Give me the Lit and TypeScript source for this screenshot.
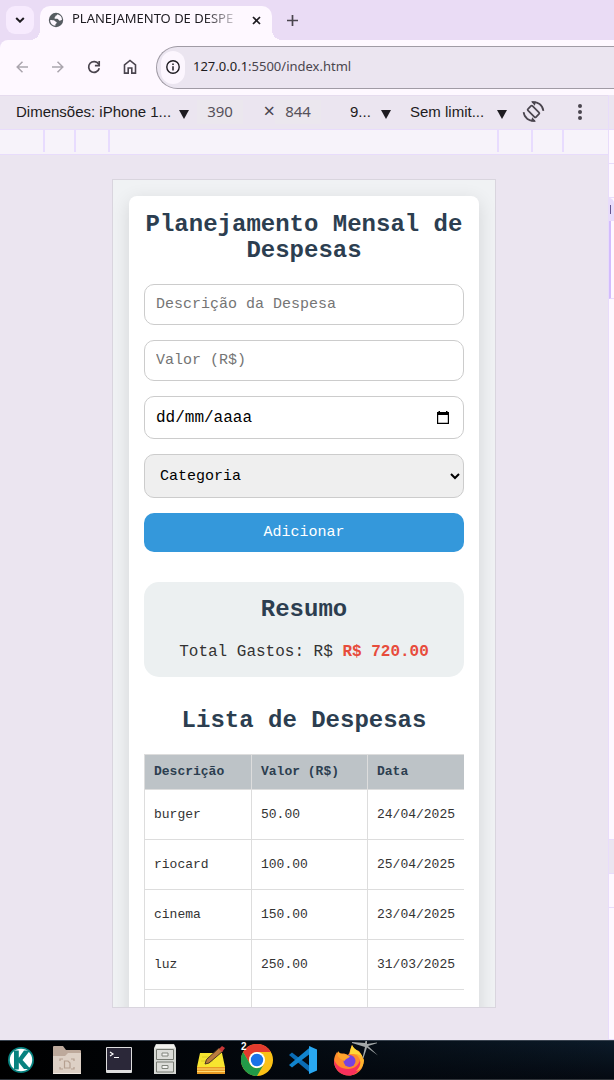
import { LitElement, html, css, svg } from "lit";
import { customElement, property } from "lit/decorators.js";

const caret = html`<svg class="caret" width="10" height="9" viewBox="0 0 10 9" aria-hidden="true"><path d="M0 0h10L5 9z" fill="currentColor" /></svg>`;

/* ---------- Expense planner page ---------- */

interface Expense {
  name: string;
  value: string;
  date: string;
}

@customElement("expense-planner")
class ExpensePlanner extends LitElement {
  @property({ attribute: false }) expenses: Expense[] = [
    { name: "burger", value: "50.00", date: "24/04/2025" },
    { name: "riocard", value: "100.00", date: "25/04/2025" },
    { name: "cinema", value: "150.00", date: "23/04/2025" },
    { name: "luz", value: "250.00", date: "31/03/2025" },
    { name: "", value: "", date: "" },
  ];

  static styles = css`
    :host {
      display: block;
      padding: 16px;
      background: #f0f2f4;
      color: #333;
      font-family: "Liberation Mono", "Courier New", monospace;
      font-size: 16px;
    }
    .card {
      padding: 16px 15px;
      border-radius: 8px;
      background: #fff;
      box-shadow: 0 5px 19px rgba(0, 0, 0, 0.12);
    }
    h1,
    h2 {
      margin: 0;
      color: #2c3e50;
      font-size: 24px;
      line-height: 26px;
      font-weight: bold;
      text-align: center;
    }
    .form {
      display: flex;
      flex-direction: column;
      gap: 15px;
      margin-top: 20px;
    }
    .field,
    .submit {
      box-sizing: border-box;
      width: 100%;
      height: 41px;
      margin: 0;
      padding: 0 11px;
      border: 1px solid #ccc;
      border-radius: 10px;
      background: #fff;
      color: #000;
      font-family: inherit;
      font-size: 15px;
    }
    .field::placeholder {
      color: #757575;
      opacity: 1;
    }
    .date {
      display: flex;
      align-items: center;
      height: 43px;
    }
    .date-input {
      flex: 1;
      min-width: 0;
      padding: 0;
      border: 0;
      outline: 0;
      background: none;
      color: #000;
      font-family: inherit;
      font-size: 16px;
    }
    .picker {
      display: flex;
      padding: 3px;
      border: 0;
      background: none;
      color: #000;
    }
    .category {
      height: 44px;
      background: #efefef;
    }
    .submit {
      height: 39px;
      border: 0;
      background: #3498db;
      color: #fff;
    }
    .summary {
      margin-top: 30px;
      padding: 15px;
      border-radius: 15px;
      background: #ecf0f1;
      text-align: center;
    }
    .total {
      margin: 19px 0 0;
      line-height: 20px;
    }
    .amount {
      color: #e74c3c;
      font-weight: bold;
    }
    .list-title {
      margin-top: 31px;
    }
    .table-wrap {
      margin-top: 20px;
      overflow: hidden;
    }
    table {
      width: 360px;
      table-layout: fixed;
      border-collapse: collapse;
      font-size: 13px;
    }
    .col-name {
      width: 107px;
    }
    .col-value {
      width: 116px;
    }
    th,
    td {
      box-sizing: border-box;
      padding: 0 9px;
      border: 1px solid #ddd;
      text-align: left;
      white-space: nowrap;
    }
    th {
      height: 35px;
      padding-bottom: 2px;
      background: #bdc3c7;
      color: #2c3e50;
    }
    td {
      height: 50px;
    }
  `;

  render() {
    return html`
      <div class="card">
        <h1>Planejamento Mensal de Despesas</h1>
        <form class="form" @submit=${(e: Event) => e.preventDefault()}>
          <input class="field" type="text" placeholder="Descrição da Despesa" aria-label="Descrição da Despesa" />
          <input class="field" type="text" inputmode="decimal" placeholder="Valor (R$)" aria-label="Valor (R$)" />
          <div class="field date">
            <input class="date-input" type="text" value="dd/mm/aaaa" aria-label="Data" />
            <button class="picker" type="button" aria-label="Abrir calendário">
              <svg width="12" height="13" viewBox="0 0 12 13">
                <path d="M1.5 0h1.5v1h6V0h1.5v1H12v12H0V1h1.5zM1.2 4v7.8h9.6V4z" fill="currentColor" fill-rule="evenodd" />
              </svg>
            </button>
          </div>
          <select class="field category" aria-label="Categoria">
            <option>Categoria</option>
          </select>
          <button class="submit" type="submit">Adicionar</button>
        </form>
        <section class="summary">
          <h2>Resumo</h2>
          <p class="total">Total Gastos: R$ <span class="amount">R$ 720.00</span></p>
        </section>
        <h2 class="list-title">Lista de Despesas</h2>
        <div class="table-wrap">
          <table>
            <colgroup><col class="col-name" /><col class="col-value" /><col /></colgroup>
            <thead>
              <tr><th>Descrição</th><th>Valor (R$)</th><th>Data</th></tr>
            </thead>
            <tbody>
              ${this.expenses.map((e) => html`<tr><td>${e.name}</td><td>${e.value}</td><td>${e.date}</td></tr>`)}
            </tbody>
          </table>
        </div>
      </div>
    `;
  }
}

/* ---------- Browser tab strip and address bar ---------- */

@customElement("browser-chrome")
class BrowserChrome extends LitElement {
  static styles = css`
    :host {
      display: block;
      background: #eadcf5;
      font-family: "Noto Sans", sans-serif;
    }
    button {
      display: flex;
      align-items: center;
      justify-content: center;
      padding: 0;
      border: 0;
      background: none;
      color: #4a454e;
    }
    .tabs {
      display: flex;
      align-items: flex-start;
      gap: 6px;
      height: 34px;
      padding: 6px 6px 0;
    }
    .search {
      width: 28px;
      height: 28px;
      border-radius: 9px;
      background: #f7ebfe;
      color: #1d1b20;
    }
    .tab {
      position: relative;
      display: flex;
      align-items: center;
      box-sizing: border-box;
      width: 232px;
      height: 34px;
      padding: 0 8px 6px;
      border-radius: 10px 10px 0 0;
      background: #fef8ff;
    }
    .tab::before,
    .tab::after {
      content: "";
      position: absolute;
      bottom: 0;
      width: 10px;
      height: 10px;
    }
    .tab::before {
      right: 100%;
      background: radial-gradient(circle at 0 0, transparent 10px, #fef8ff 10px);
    }
    .tab::after {
      left: 100%;
      background: radial-gradient(circle at 100% 0, transparent 10px, #fef8ff 10px);
    }
    .title {
      flex: 1;
      margin: 0 8px;
      overflow: hidden;
      color: #1d1b20;
      font-size: 13px;
      line-height: 20px;
      padding-bottom: 4px;
      white-space: nowrap;
      mask-image: linear-gradient(90deg, #000 78%, transparent 102%);
    }
    .close {
      width: 16px;
      height: 16px;
      color: #1d1b20;
    }
    .new {
      width: 28px;
      height: 28px;
    }
    .bar {
      display: flex;
      align-items: center;
      height: 55px;
      padding-left: 4px;
      border-radius: 8px 0 0 0;
      background: #fef8ff;
      overflow: hidden;
    }
    .nav {
      width: 36px;
      height: 36px;
      padding-bottom: 2px;
    }
    .off {
      color: #aba6ae;
    }
    .omnibox {
      display: flex;
      flex: 1;
      align-items: center;
      box-sizing: border-box;
      height: 43px;
      margin-left: 8px;
      padding: 0 0 1px 4px;
      border: 1px solid #a09ba5;
      border-right: 0;
      border-radius: 22px 0 0 22px;
      background: #ebe5f0;
    }
    .info {
      width: 24px;
      height: 33px;
      border-radius: 12px;
      background: #fcf6fe;
      color: #1d1b20;
    }
    .url {
      padding: 0 0 3px 8px;
      color: #4a454e;
      font-size: 13px;
      line-height: 20px;
      text-decoration: none;
    }
    .host {
      color: #1d1b20;
    }
  `;

  render() {
    return html`
      <div class="tabs">
        <button class="search" aria-label="Pesquisar guias">
          <svg width="10" height="6" viewBox="0 0 10 6"><path d="M1.2 1 5 4.7 8.8 1" fill="none" stroke="currentColor" stroke-width="2" /></svg>
        </button>
        <div class="tab">
          <svg width="16" height="16" viewBox="0 0 16 16">
            <circle cx="8" cy="8" r="7.2" fill="#565c61" />
            <path d="M2.100 8c1.500.3 3.800-.2 4.800.9.700.8 1.800.9 1.900 1.900 0 .9-1.400.8-1.400 1.700v1.200A5.900 5.900 0 0 1 2.100 8zM9.200 2.300c.2.900-.7 1.200-1.500 1.400-.8.3.1 1.200-.7 1.600-.7.4-.8 1.300.2 1.400 1.600.1 3-.2 3.500 1.200.3 1 1.300.9 2.400.4l.9-.6a5.900 5.900 0 0 0-4.800-5.400z" fill="#fef8ff" />
          </svg>
          <span class="title">PLANEJAMENTO DE DESPE</span>
          <button class="close" aria-label="Fechar guia">
            <svg width="9" height="9" viewBox="0 0 9 9"><path d="m1 1 7 7M8 1 1 8" stroke="currentColor" stroke-width="1.700" /></svg>
          </button>
        </div>
        <button class="new" aria-label="Nova guia">
          <svg width="11" height="11" viewBox="0 0 11 11"><path d="M5.500 0v11M0 5.500h11" stroke="currentColor" stroke-width="1.700" /></svg>
        </button>
      </div>
      <div class="bar">
        <button class="nav off" aria-label="Voltar">
          <svg width="12" height="12" viewBox="0 0 12 12"><path d="M12 6H1.300M6.500.7 1.200 6l5.300 5.300" fill="none" stroke="currentColor" stroke-width="1.500" /></svg>
        </button>
        <button class="nav off" aria-label="Avançar">
          <svg width="12" height="12" viewBox="0 0 12 12"><path d="M0 6h10.700M5.500.7 10.800 6l-5.300 5.300" fill="none" stroke="currentColor" stroke-width="1.500" /></svg>
        </button>
        <button class="nav" aria-label="Recarregar">
          <svg width="14" height="14" viewBox="0 0 14 14"><path d="M12.300 8.300A5.400 5.400 0 1 1 11.600 4L12 4.700" fill="none" stroke="currentColor" stroke-width="1.700" /><path d="M12.200 1v4.600H7.900" fill="none" stroke="currentColor" stroke-width="1.700" /></svg>
        </button>
        <button class="nav" aria-label="Página inicial">
          <svg width="14" height="15" viewBox="0 0 14 15"><path d="M1.500 6v8.100h3.700V9h3.600v5.100h3.700V6L7 1.500z" fill="none" stroke="currentColor" stroke-width="1.600" /></svg>
        </button>
        <div class="omnibox">
          <button class="info" aria-label="Informações do site">
            <svg width="14" height="14" viewBox="0 0 14 14"><circle cx="7" cy="7" r="6.200" fill="none" stroke="currentColor" stroke-width="1.400" /><path d="M7 6.200v4.200M7 3.500v1.500" stroke="currentColor" stroke-width="1.500" /></svg>
          </button>
          <a class="url" href="#"><span class="host">127.0.0.1</span>:5500/index.html</a>
        </div>
      </div>
    `;
  }
}

/* ---------- Device emulation toolbar ---------- */

@customElement("device-toolbar")
class DeviceToolbar extends LitElement {
  static styles = css`
    :host {
      display: block;
      font-family: "Liberation Sans", Arial, sans-serif;
      font-size: 15px;
      color: #1d1b20;
    }
    .tools {
      display: flex;
      align-items: center;
      box-sizing: border-box;
      height: 35px;
      padding: 0 16px 2px;
      border-top: 1px solid #e6dcee;
      border-bottom: 1px solid #e8dcfb;
      background: #ebe5f0;
    }
    .pick {
      display: flex;
      align-items: center;
      justify-content: space-between;
    }
    .device {
      width: 173px;
    }
    .zoom {
      width: 41px;
      margin-left: 29px;
    }
    .throttle {
      width: 97px;
      margin-left: 19px;
    }
    select {
      flex: 1;
      min-width: 0;
      padding: 0;
      border: 0;
      appearance: none;
      background: none;
      color: inherit;
      font: inherit;
    }
    .caret {
      flex: none;
      margin-top: 5px;
    }
    .size {
      box-sizing: border-box;
      width: 46px;
      height: 24px;
      padding: 0 0 2px;
      border: 0;
      background: #ebe7ee;
      color: #56515a;
      font-family: "Noto Sans", sans-serif;
      font-size: 15px;
      text-align: center;
    }
    .width {
      margin-left: 8px;
    }
    .times {
      width: 32px;
      padding-bottom: 2px;
      color: #4a454e;
      font-family: "Noto Sans", sans-serif;
      font-size: 20px;
      line-height: 24px;
      text-align: right;
    }
    .icon {
      display: flex;
      padding: 0;
      border: 0;
      background: none;
      color: #4a454e;
    }
    .rotate {
      margin-left: 15px;
    }
    .more {
      margin-left: 32px;
    }
    .ruler {
      box-sizing: border-box;
      height: 25px;
      padding: 0 44px 2px 43px;
      border-bottom: 1px solid #e8dcfb;
      background: #f7f3fa;
    }
    .band {
      box-sizing: border-box;
      height: 100%;
      padding: 0 29px;
      border: solid #e8dcfe;
      border-width: 0 2px;
    }
    .inner {
      padding: 0 32px;
    }
  `;

  render() {
    return html`
      <div class="tools">
        <div class="pick device">
          <select aria-label="Dimensões"><option>Dimensões: iPhone 1...</option></select>${caret}
        </div>
        <input class="size width" type="text" value="390" aria-label="Largura" />
        <span class="times">×</span>
        <input class="size" type="text" value="844" aria-label="Altura" />
        <div class="pick zoom">
          <select aria-label="Zoom"><option>9...</option></select>${caret}
        </div>
        <div class="pick throttle">
          <select aria-label="Limitação"><option>Sem limit...</option></select>${caret}
        </div>
        <button class="icon rotate" aria-label="Girar">
          <svg width="23" height="23" viewBox="0 0 23 23" fill="none" stroke="currentColor" stroke-width="1.700">
            <rect x="8.300" y="5.800" width="6.400" height="11.400" rx="1" transform="rotate(-45 11.500 11.500)" />
            <path d="M10 2.200a9.800 9.800 0 0 1 11.400 8.600M13 20.800A9.800 9.800 0 0 1 1.600 12.200" />
            <path d="M9 1.500h5l-1.200 4.200zM14 21.500H9l1.200-4.200z" fill="currentColor" stroke="none" />
          </svg>
        </button>
        <button class="icon more" aria-label="Mais opções">
          <svg width="6" height="16" viewBox="0 0 6 16" fill="currentColor"><circle cx="3" cy="2" r="2" /><circle cx="3" cy="8" r="2" /><circle cx="3" cy="14" r="2" /></svg>
        </button>
      </div>
      <div class="ruler">
        <div class="band"><div class="band inner"><div class="band"></div></div></div>
      </div>
    `;
  }
}

/* ---------- Desktop taskbar ---------- */

const apps = [
  {
    name: "Menu",
    art: svg`<circle cx="16" cy="16" r="13" fill="#07827f"/><circle cx="16" cy="16" r="11.200" fill="#fff"/><path d="M9 6.500h4.800v19H9zM13 15l6-8.500h6L17.500 16l8 9H19l-6-7.500z" fill="#07827f"/>`,
  },
  {
    name: "Arquivos",
    art: svg`<path d="M2 28V3q0-1 1-1h9l3 4h14q1 0 1 1v10H2z" fill="#bda99b"/><path d="M2 12h12l3-3h13v21H2z" fill="#ddd0c5"/><path d="M2 29h28v1H2z" fill="#f2eae3"/><path d="M9 17v-2h3M20 15h3v2M9 23v2h3M20 25h3v-2M13.500 17h3.500l2 2v5h-5.500z" fill="none" stroke="#b5a091" stroke-width="1.200"/>`,
  },
  {
    name: "Terminal",
    art: svg`<rect x="3" y="3" width="26" height="26" rx="1" fill="#dedede"/><path d="M4 4h24v22H4z" fill="#2b2839"/><path d="m7 8 3 2-3 2M11 13.500h5" fill="none" stroke="#fff" stroke-width="1.200"/>`,
  },
  {
    name: "Gerenciador",
    art: svg`<path d="M7 0h18l2 4v26H5V4z" fill="#d5d7d3"/><path d="M7 1h18l1 3H6z" fill="#f1f1ee"/><path d="M7.500 5.500h17v10h-17zM7.500 18h17v10h-17z" fill="#dcddd9" stroke="#777b73"/><path d="M13 9h6v3h-6zM13 21.500h6v3h-6z" fill="#f4f4f2" stroke="#80847c"/>`,
  },
  {
    name: "Notas",
    art: svg`<path d="M5 9h22l3 14H2z" fill="#f7e52f"/><path d="M2 23h28v7H2z" fill="#e89b24"/><path d="M2 25h28M2 27.500h28" stroke="#ffdb70"/><path d="M7 13h14M6 17h12" stroke="#dccb26"/><path d="m10 20 1.500-4.500L24 4l3.500 3.500L14 19z" fill="#b97b3e" stroke="#4b3524"/><path d="m24 5 3-3 3 2-3 4z" fill="#c93737"/>`,
  },
  {
    name: "Chrome",
    art: svg`<circle cx="16" cy="16" r="16" fill="#fbc116"/><path d="M2.100 8A16 16 0 0 1 29.900 8H16a8 8 0 0 0-7 12z" fill="#e33b2e"/><path d="M2.100 8A16 16 0 0 0 16 32l7-12a8 8 0 0 1-14 0z" fill="#229a48"/><circle cx="16" cy="16" r="8" fill="#fff"/><circle cx="16" cy="16" r="6.200" fill="#1a73e8"/>`,
  },
  {
    name: "VS Code",
    art: svg`<path d="m2 11 3-2.500L24 23v6.500z" fill="#0a6cb5"/><path d="m2 21 3 2.500L24 9V2.500z" fill="#1184ce"/><path d="m22 2 8 3.600v20.800L22 30V2z" fill="#29a8f2"/>`,
  },
  {
    name: "Firefox",
    art: svg`<path d="M19 1c2 4 4 5 7 6 4 5 6 11 3 17-3 5-8 7.500-13 7.500C7 31.500 1 25 1 17c0-3 1-6 3-9 1 1 2 2 3 2 3-1 6 0 8 1 2-2 2-6 4-10z" fill="#ff8a2b"/><path d="M19 1c2 5 9 6 11 13-4-4-9-4-13-4 0-4 1-6 2-9z" fill="#ffd836"/><path d="M1.200 15c1 6 7 10 14 10 6 0 11-4 12-10 3 8-3 16.500-11 16.500C7 31.500 0 24 1.200 15z" fill="#f8305c"/><path d="M22 10c7 4 7 12 1 17 5-1 8-6 8-11-1-4-5-6-9-6z" fill="#ffb32c"/><circle cx="16.500" cy="17" r="6" fill="#7842df"/><path d="M5 7c2 3 4 3 8 3.500l4 2c-2 2.500-4 1.500-5.500 4.500-3-1-5-3-7-5z" fill="#ffa52c"/>`,
  },
];

@customElement("task-bar")
class TaskBar extends LitElement {
  static styles = css`
    :host {
      position: relative;
      display: flex;
      align-items: center;
      gap: 14px;
      box-sizing: border-box;
      height: 40px;
      padding: 0 5px;
      border-top: 1px solid #3a4450;
      border-bottom: 1px solid #30343a;
      background: linear-gradient(90deg, #000 0, #02060b 35%, transparent 100%),
        linear-gradient(#0c1b29, #050a12);
      overflow: hidden;
    }
    .app {
      display: flex;
      flex: none;
      padding: 0;
      border: 0;
      background: none;
    }
    .app:nth-of-type(3) {
      margin-left: 6px;
    }
    .count {
      position: absolute;
      left: 241px;
      top: 0;
      color: #fff;
      font: bold 10px/12px "Liberation Sans", sans-serif;
    }
    .star {
      position: absolute;
      left: 350px;
      top: 0;
    }
  `;

  render() {
    return html`
      <svg class="star" width="28" height="18" viewBox="0 0 28 18"><path d="M15 2 15.500 0h1.500v3L27 1.500v.8L18 5l10 9.500L17 6.500 13.500 17h-1L15 6 2 2V1z" fill="#a3a8a8" /></svg>
      ${apps.map((a) => html`<button class="app" aria-label=${a.name}><svg width="32" height="32" viewBox="0 0 32 32">${a.art}</svg></button>`)}
      <span class="count">2</span>
    `;
  }
}

/* ---------- Whole window ---------- */

@customElement("app-root")
class AppRoot extends LitElement {
  static styles = css`
    :host {
      display: flex;
      flex-direction: column;
      height: 100vh;
      overflow: hidden;
    }
    .work {
      display: flex;
      flex: 1;
      min-height: 0;
    }
    .emulator {
      display: flex;
      flex: 1;
      flex-direction: column;
      min-width: 0;
    }
    .stage {
      display: flex;
      flex: 1;
      justify-content: center;
      min-height: 0;
      padding: 24px 16px 32px;
      background: #ebe5f0;
    }
    .screen {
      box-sizing: border-box;
      width: 100%;
      max-width: 384px;
      border: 1px solid #d9d5de;
      overflow: hidden;
    }
    .panel {
      display: flex;
      flex-direction: column;
      width: 5px;
      border-left: 1px solid #e8dcfb;
      background: #fef8ff;
    }
    .panel > div {
      box-sizing: border-box;
      border-bottom: 1px solid #e8dcfb;
    }
    .head {
      height: 35px;
      background: #ebe5f0;
    }
    .row {
      height: 34px;
    }
    .chip {
      display: flex;
      align-items: center;
      height: 23px;
      border-radius: 0 8px 0 0;
      background: #e8dcfb;
    }
    .mark {
      width: 1px;
      height: 9px;
      margin-left: 1px;
      background: #65558f;
    }
    .block {
      height: 78px;
      border-left: 2px solid #d3bcfd;
    }
    .space {
      flex: 1;
    }
    .grey {
      height: 34px;
      background: #ebe5f0;
    }
    .foot {
      height: 132px;
    }
  `;

  render() {
    return html`
      <browser-chrome></browser-chrome>
      <div class="work">
        <main class="emulator">
          <device-toolbar></device-toolbar>
          <div class="stage">
            <div class="screen"><expense-planner></expense-planner></div>
          </div>
        </main>
        <aside class="panel" aria-label="Ferramentas">
          <div class="head"></div>
          <div class="row"></div>
          <div class="row"></div>
          <div class="chip"><span class="mark"></span></div>
          <div class="block"></div>
          <div class="space"></div>
          <div class="grey"></div>
          <div class="row"></div>
          <div class="foot"></div>
        </aside>
      </div>
      <task-bar></task-bar>
    `;
  }
}
